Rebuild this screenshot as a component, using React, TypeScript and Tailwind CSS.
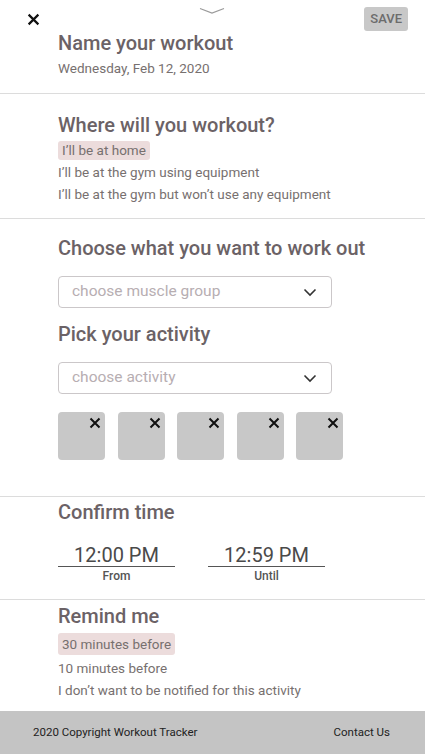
import React from "react";

const heading = "text-[20px] font-medium leading-[24px] text-[#6b6266]";
const option = "text-[13.5px] text-[#77706f]";

function Chevron() {
  return (
    <svg width="14" height="9" viewBox="0 0 14 9" fill="none">
      <polyline points="1.5,1.5 7,7 12.5,1.5" stroke="#333" strokeWidth="1.6" />
    </svg>
  );
}

function Cross({ size = 12, w = 2 }: { size?: number; w?: number }) {
  return (
    <svg width={size} height={size} viewBox="0 0 12 12">
      <path d="M1.5 1.5 L10.5 10.5 M10.5 1.5 L1.5 10.5" stroke="#111" strokeWidth={w} />
    </svg>
  );
}

function Select({ placeholder }: { placeholder: string }) {
  return (
    <div className="flex h-[32px] w-[274px] items-center justify-between rounded-[4px] border border-[#cbc7c9] pl-[13px] pr-[14px]">
      <span className="text-[15.5px] text-[#b7aeb2]">{placeholder}</span>
      <Chevron />
    </div>
  );
}

export default function App() {
  const boxes = [1, 2, 3, 4, 5];

  return (
    <div className="flex h-[754px] w-[425px] flex-col bg-white" style={{ fontFamily: "Roboto, 'Liberation Sans', sans-serif" }}>
      {/* header */}
      <div className="relative border-b border-[#dcdcdc] pb-[16px] pt-[7px]">
        <div className="flex h-[24px] items-center justify-between pl-[27px] pr-[17px]">
          <Cross size={13} w={2} />
          <div className="flex h-[24px] items-center rounded-[3px] bg-[#c8c8c8] px-[6px] text-[13px] font-medium text-[#6c6c6c]">SAVE</div>
        </div>
        <svg className="absolute left-[199px] top-[7px]" width="26" height="8" viewBox="0 0 26 8" fill="none">
          <polyline points="1,1.5 13,6 25,1.5" stroke="#9a9a9a" strokeWidth="1.2" />
        </svg>
        <div className="pl-[58px]">
          <h1 className={heading}>Name your workout</h1>
          <p className="mt-[4px] text-[13.5px] leading-[18px] text-[#77706f]">Wednesday, Feb 12, 2020</p>
        </div>
      </div>

      {/* where */}
      <div className="border-b border-[#dcdcdc] pb-[13px] pl-[58px] pt-[19px]">
        <h2 className={heading}>Where will you workout?</h2>
        <div className="mt-[2px] flex flex-col">
          <div className="flex h-[22px] items-center">
            <span className={`rounded-[3px] bg-[#ecdcdc] px-[4px] leading-[19px] ${option}`}>I’ll be at home</span>
          </div>
          <div className={`flex h-[22px] items-center ${option}`}>I’ll be at the gym using equipment</div>
          <div className={`flex h-[22px] items-center ${option}`}>I’ll be at the gym but won’t use any equipment</div>
        </div>
      </div>

      {/* activity */}
      <div className="border-b border-[#dcdcdc] pb-[36px] pl-[58px] pt-[17px]">
        <h2 className={heading}>Choose what you want to work out</h2>
        <div className="mt-[16px]">
          <Select placeholder="choose muscle group" />
        </div>
        <h2 className={`mt-[14px] ${heading}`}>Pick your activity</h2>
        <div className="mt-[16px]">
          <Select placeholder="choose activity" />
        </div>
        <div className="mt-[18px] flex gap-[12.5px]">
          {boxes.map((b) => (
            <div key={b} className="relative h-[48px] w-[47px] rounded-[4px] bg-[#c8c8c8]">
              <div className="absolute right-[4px] top-[5px]">
                <Cross size={12} w={2} />
              </div>
            </div>
          ))}
        </div>
      </div>

      {/* time */}
      <div className="border-b border-[#dcdcdc] pb-[16px] pl-[58px] pt-[3px]">
        <h2 className={heading}>Confirm time</h2>
        <div className="mt-[20px] flex gap-[33px]">
          {[
            ["12:00 PM", "From"],
            ["12:59 PM", "Until"],
          ].map(([t, l]) => (
            <div key={l} className="flex w-[117px] flex-col items-center">
              <div className="w-full border-b border-[#555] text-center text-[20px] leading-[22px] text-[#4a4a4a]">{t}</div>
              <div className="mt-[2px] text-[12px] font-medium leading-[14px] text-[#555]">{l}</div>
            </div>
          ))}
        </div>
      </div>

      {/* remind */}
      <div className="pb-[10px] pl-[58px] pt-[4px]">
        <h2 className={heading}>Remind me</h2>
        <div className="mt-[5px] flex flex-col">
          <div className="flex h-[22px] items-center">
            <span className={`rounded-[3px] bg-[#ecdcdc] px-[4px] leading-[22px] ${option}`}>30 minutes before</span>
          </div>
          <div className={`mt-[2px] flex h-[22px] items-center ${option}`}>10 minutes before</div>
          <div className={`flex h-[22px] items-center ${option}`}>I don’t want to be notified for this activity</div>
        </div>
      </div>

      {/* footer */}
      <div className="mt-auto flex h-[43px] items-center justify-between bg-[#c4c4c4] pl-[33px] pr-[35px] text-[11.5px] text-[#222]">
        <span>2020 Copyright Workout Tracker</span>
        <span>Contact Us</span>
      </div>
    </div>
  );
}
